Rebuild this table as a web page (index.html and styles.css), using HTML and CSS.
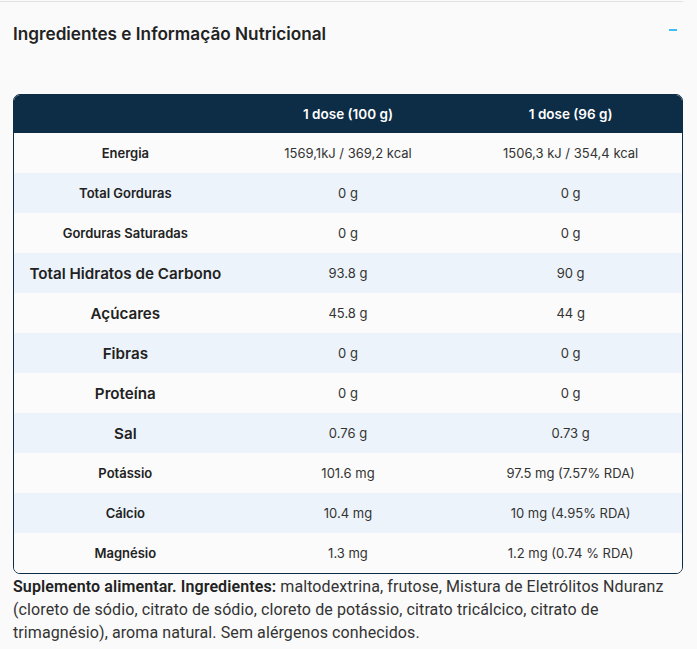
FILE: index.html
```html
<!DOCTYPE html>
<html lang="pt">
<head>
<meta charset="utf-8">
<title>Ingredientes e Informação Nutricional</title>
<link rel="stylesheet" href="styles.css">
</head>
<body>
<section class="panel">
  <div class="panel-head">
    <h2 class="panel-title">Ingredientes e Informação Nutricional</h2>
    <span class="minus" aria-hidden="true"></span>
  </div>
  <div class="table-wrap">
    <table class="nutri">
      <thead>
        <tr><th></th><th>1 dose (100 g)</th><th>1 dose (96 g)</th></tr>
      </thead>
      <tbody>
        <tr><th>Energia</th><td>1569,1kJ / 369,2 kcal</td><td>1506,3 kJ / 354,4 kcal</td></tr>
        <tr><th>Total Gorduras</th><td>0 g</td><td>0 g</td></tr>
        <tr><th>Gorduras Saturadas</th><td>0 g</td><td>0 g</td></tr>
        <tr><th class="big">Total Hidratos de Carbono</th><td>93.8 g</td><td>90 g</td></tr>
        <tr><th class="big">Açúcares</th><td>45.8 g</td><td>44 g</td></tr>
        <tr><th class="big">Fibras</th><td>0 g</td><td>0 g</td></tr>
        <tr><th class="big">Proteína</th><td>0 g</td><td>0 g</td></tr>
        <tr><th class="big">Sal</th><td>0.76 g</td><td>0.73 g</td></tr>
        <tr><th>Potássio</th><td>101.6 mg</td><td>97.5 mg (7.57% RDA)</td></tr>
        <tr><th>Cálcio</th><td>10.4 mg</td><td>10 mg (4.95% RDA)</td></tr>
        <tr><th>Magnésio</th><td>1.3 mg</td><td>1.2 mg (0.74 % RDA)</td></tr>
      </tbody>
    </table>
  </div>
  <p class="ingredients"><strong>Suplemento alimentar. Ingredientes:</strong> maltodextrina, frutose, Mistura de Eletrólitos Nduranz (cloreto de sódio, citrato de sódio, cloreto de potássio, citrato tricálcico, citrato de trimagnésio), aroma natural. Sem alérgenos conhecidos.</p>
</section>
</body>
</html>
```

FILE: styles.css
```css
html, body {
  margin: 0;
  padding: 0;
  background: #fafafa;
}
body {
  font-family: Inter, "Liberation Sans", sans-serif;
  color: #222;
}
.panel {
  width: 670px;
  margin-top: 1px;
  padding-left: 13px;
  border-top: 1px solid #e2e2e2;
}
.panel-head {
  display: flex;
  align-items: center;
  justify-content: space-between;
  height: 62px;
  margin-bottom: 30px;
}
.panel-title {
  margin: 0;
  font-size: 17.2px;
  font-weight: 600;
  color: #222;
}
.minus {
  width: 8px;
  height: 2px;
  background: #3ec0f7;
  margin-right: 6px;
  margin-top: -6px;
}
.table-wrap {
  border: 1px solid #0d2c45;
  border-radius: 7px;
  overflow: hidden;
}
.nutri {
  width: 100%;
  border-collapse: collapse;
  table-layout: fixed;
}
.nutri thead tr {
  background: #0d2c45;
  height: 38px;
}
.nutri thead th {
  color: #fff;
  font-size: 13.5px;
  font-weight: 600;
  padding: 0;
}
.nutri tbody tr {
  height: 40px;
  background: #fbfbfb;
}
.nutri tbody tr:nth-child(even) {
  background: #edf3fa;
}
.nutri tbody th {
  font-size: 13px;
  font-weight: 600;
  color: #222;
  padding: 0;
}
.nutri tbody th.big {
  font-size: 15.2px;
}
.nutri td {
  text-align: center;
  font-size: 13px;
  color: #333;
  padding: 0;
}
.ingredients {
  margin: 0;
  padding-top: 1px;
  font-family: Roboto, "Liberation Sans", sans-serif;
  font-size: 16px;
  letter-spacing: 0.1px;
  line-height: 23px;
  color: #333;
}
.ingredients strong {
  font-weight: 600;
  color: #222;
}
```
